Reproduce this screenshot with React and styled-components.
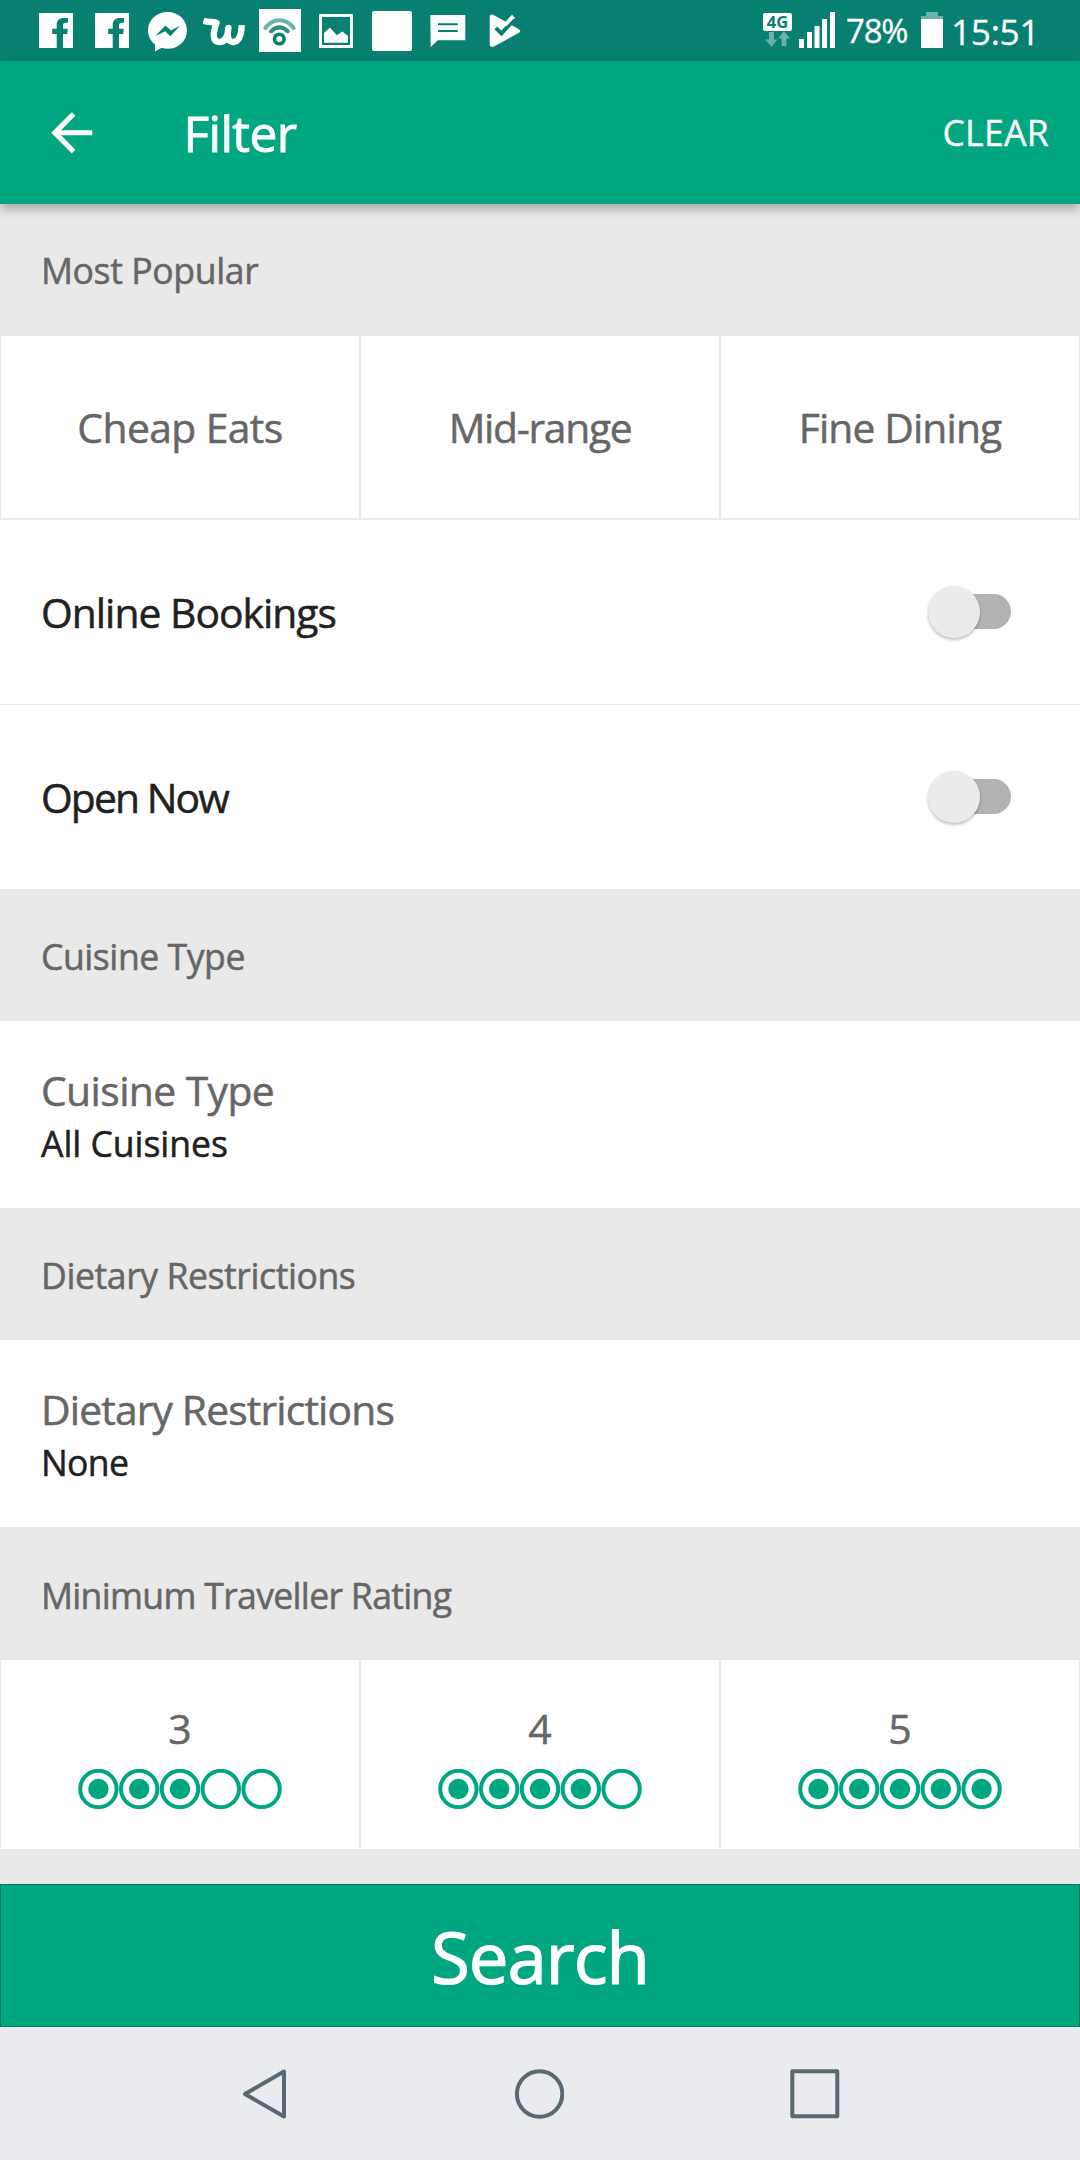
import React from "react";
import styled, { createGlobalStyle } from "styled-components";

const GREEN = "#00a680";
const TEAL = "#088071";
const GREY = "#e9e9e9";
const MUTED = "#666666";
const INK = "#212121";

const GlobalStyle = createGlobalStyle`
  body {
    margin: 0;
    background: ${GREY};
    font-family: "Open Sans", "Noto Sans", sans-serif;
  }
  * { box-sizing: border-box; }
  svg { display: block; flex: none; }
  button { font: inherit; border: 0; margin: 0; padding: 0; background: none; color: inherit; }
`;

const Screen = styled.div`
  display: flex;
  flex-direction: column;
  width: 1080px;
  height: 2160px;
  overflow: hidden;
  background: ${GREY};
`;

const Text = styled.span`
  font-size: ${(p) => p.$size}px;
  letter-spacing: ${(p) => p.$track || 0}px;
  line-height: ${(p) => (p.$line ? `${p.$line}px` : "normal")};
  color: ${(p) => p.$color || "inherit"};
  -webkit-text-stroke: ${(p) => (p.$stroke === undefined ? 0.5 : p.$stroke)}px currentColor;
  white-space: nowrap;
`;

/* ---------- status bar ---------- */
const StatusBar = styled.header`
  display: flex;
  justify-content: space-between;
  height: 61px;
  padding: 0 43px 0 39px;
  background: ${TEAL};
  color: #fff;
  flex: none;
`;

const StatusGroup = styled.div`
  display: flex;
  align-items: flex-start;
`;

const Slot = styled.div`
  flex: none;
  margin: ${(p) => p.$top}px 0 0 ${(p) => p.$gap || 0}px;
`;

const StatusText = styled(Text)`
  width: ${(p) => p.$width}px;
  margin-left: ${(p) => p.$gap}px;
  margin-top: ${(p) => p.$top}px;
`;

const WhiteTile = styled.div`
  width: 40px;
  height: 40px;
  border-radius: 2px;
  background: #fff;
`;

const NetworkBadge = styled.div`
  width: 29px;
  height: 18px;
  border-radius: 2px;
  background: #fff;
  color: ${TEAL};
  font: 700 16.5px/18px "Open Sans", sans-serif;
  text-align: center;
`;

const FacebookIcon = () => (
  <svg width="34" height="35" viewBox="0 0 34 35">
    <path fill="#fff" fillRule="evenodd" d="M0 0H34V35H24V21H28.2L28.8 15.8H24V12.4C24 10.6 24.8 9.8 26.6 9.8H29V5H25C20.4 5 17.7 7.6 17.7 12V15.8H13.2V21H17.7V35H0Z" />
  </svg>
);

const MessengerIcon = () => (
  <svg width="39" height="40" viewBox="148 12 39 40">
    <path fill="#fff" d="M167.5 12C156.6 12 148 20 148 30.5C148 36.4 150.5 40.8 155 44.6V51.5L161.6 47.8C163.5 48.5 165.5 48.8 167.5 48.8C178.4 48.8 187 40.9 187 30.5C187 20 178.4 12 167.5 12Z" />
    <path fill={TEAL} d="M155.5 36L165.3 25.5L171 30.5L180.3 25.5L170.4 36.3L165.2 31.2Z" />
  </svg>
);

const WishIcon = () => (
  <svg width="43" height="31" viewBox="203 16 43 31">
    <path fill="none" stroke="#fff" strokeWidth="6.4" strokeLinejoin="round" d="M203.4 20.6C207.5 22.5 211.5 21.6 216.6 22.8C213.4 31 211.3 41.8 219.4 42C226.3 42.2 227.8 35 228.4 28C227 35.8 227.6 42.2 233.4 42C239.6 41.8 241.4 33.6 241.8 25.2" />
  </svg>
);

const WifiIcon = () => (
  <svg width="42" height="43" viewBox="259 9 42 43">
    <path fill="#fff" d="M259 9H301V52H259Z" />
    <circle cx="279.3" cy="39" r="4.8" fill="none" stroke={TEAL} strokeWidth="3.6" />
    <path fill="none" stroke="#2a9183" strokeWidth="4" strokeLinecap="round" d="M271 31.4Q279.4 23.4 287.8 31.4" />
    <path fill="none" stroke="#6bb3aa" strokeWidth="4" strokeLinecap="round" d="M265.3 28Q271 20.2 279.4 20.2T293.7 28" />
  </svg>
);

const GalleryIcon = () => (
  <svg width="34" height="34" viewBox="0 0 34 34">
    <path fill="none" stroke="#fff" strokeWidth="3" d="M1.5 1.5H32.5V32.5H1.5Z" />
    <path fill="#fff" d="M5 28.8V19L11 13.6L17.8 21.2L23.4 17.6L29 22V28.8Z" />
  </svg>
);

const MessageIcon = () => (
  <svg width="36" height="33" viewBox="0 0 36 33">
    <path fill="#fff" d="M.3 0H35.3V25.3H7.8L.7 32Z" />
    <path fill="none" stroke={TEAL} strokeWidth="2" d="M8 9.2H27.8M8 16H27.8" />
  </svg>
);

const PlayCheckIcon = () => (
  <svg width="32" height="34" viewBox="489 14 32 34">
    <path fill="#fff" d="M489.7 17C489.7 14.8 491.6 14 493.4 15L507.4 22.6L512 15.8L514.8 18L501.6 35.8L495.3 30.2L498 27.2L501.2 30L507.3 22.6L519 29.2C520.7 30.4 520.7 31.8 519 32.8L494 46.4C491.7 47.6 489.7 46.5 489.7 44Z" />
    <path fill="none" stroke={TEAL} strokeWidth="3.8" d="M495.8 27.8L501.4 33.4L514.6 19.4" />
    <path fill="none" stroke="#fff" strokeWidth="3.8" d="M505 24.8L513.4 16.2" />
  </svg>
);

const DataArrows = () => (
  <svg width="29" height="16" viewBox="763 31 29 16">
    <path fill="#6bb3aa" d="M769 32H774V39.5H777.5L771.5 46.8L765 39.5H769ZM781.6 46V38.6H778L784 31.2L790.2 38.6H786.4V46Z" />
  </svg>
);

const SignalIcon = () => (
  <svg width="36" height="36" viewBox="0 0 36 36">
    <path fill="#fff" d="M0 27H5V36H0ZM8 20H13V36H8ZM15.5 14H20.5V36H15.5ZM23 7H28V36H23ZM31 0H36V36H31Z" />
  </svg>
);

const BatteryIcon = () => (
  <svg width="22" height="36" viewBox="0 0 22 36">
    <path fill="#6bb3aa" d="M5 0H17V4H22V7H0V4H5Z" />
    <path fill="#fff" d="M0 7H22V36H0Z" />
  </svg>
);

/* ---------- app bar ---------- */
const AppBar = styled.nav`
  position: relative;
  display: flex;
  align-items: center;
  flex: none;
  height: 143px;
  padding: 0 31px 0 41px;
  background: ${GREEN};
  color: #fff;
  box-shadow: 0 5px 10px rgba(0, 0, 0, 0.28);
`;

const Title = styled(Text)`
  flex: 1;
  margin-left: 81px;
`;

const ClearAction = styled.button`
  padding-bottom: 1px;
`;

const BackIcon = () => (
  <svg width="61.5" height="61.5" viewBox="0 0 24 24">
    <path fill="#fff" d="M20 11H7.83l5.59-5.59L12 4l-8 8 8 8 1.41-1.41L7.83 13H20v-2z" />
  </svg>
);

/* ---------- filter list ---------- */
const Content = styled.main`
  flex: 1;
`;

const SectionTitle = styled.h2`
  display: flex;
  align-items: center;
  height: ${(p) => p.$height || 132}px;
  margin: 0;
  padding: ${(p) => p.$nudge || 0}px 0 0 41px;
  font-weight: 400;
  color: ${MUTED};
`;

const Cells = styled.div`
  display: grid;
  grid-template-columns: repeat(3, 1fr);
  height: ${(p) => p.$height}px;
`;

const Cell = styled.button`
  display: flex;
  flex-direction: column;
  align-items: center;
  justify-content: ${(p) => (p.$top ? "flex-start" : "center")};
  padding-top: ${(p) => p.$top || 0}px;
  border: solid ${GREY};
  border-width: 0 1px ${(p) => p.$edge || 0}px;
  background: #fff;
  color: ${MUTED};
`;

const SwitchRow = styled.label`
  display: flex;
  align-items: center;
  justify-content: space-between;
  height: ${(p) => (p.$divided ? 185 : 184)}px;
  padding: 0 69px 0 41px;
  border-bottom: ${(p) => (p.$divided ? 1 : 0)}px solid ${GREY};
  background: #fff;
  color: ${INK};
`;

const Track = styled.span`
  display: flex;
  align-items: center;
  width: 76px;
  height: 35px;
  margin-bottom: 1px;
  border-radius: 18px;
  background: #b2b2b2;
`;

const Thumb = styled.span`
  flex: none;
  width: 52px;
  height: 52px;
  margin-left: -7.5px;
  border-radius: 50%;
  background: #ebebeb;
  box-shadow: 0 2px 3px rgba(0, 0, 0, 0.24), 0 0 2px rgba(0, 0, 0, 0.06);
`;

const ValueRow = styled.section`
  display: flex;
  flex-direction: column;
  height: 187px;
  padding: 42px 0 0 41px;
  background: #fff;
  color: ${MUTED};
`;

const Bubbles = styled.svg`
  margin-top: 14px;
`;

function Rating({ value }) {
  return (
    <Bubbles width="206" height="40" viewBox="0 0 206 40">
      {[0, 1, 2, 3, 4].map((i) => {
        const cx = 21.4 + i * 40.8;
        return (
          <g key={i}>
            <circle cx={cx} cy="20" r="18.2" fill="#fff" stroke={GREEN} strokeWidth="4" />
            {i < value && <circle cx={cx} cy="20" r="10.2" fill={GREEN} />}
          </g>
        );
      })}
    </Bubbles>
  );
}

/* ---------- footer ---------- */
const SearchButton = styled.button`
  && {
    flex: none;
    height: 143px;
    padding-top: 2px;
    border: 1px solid #067a55;
    background: ${GREEN};
    color: #fff;
  }
`;

const SystemNav = styled.footer`
  display: flex;
  align-items: center;
  justify-content: space-between;
  flex: none;
  height: 133px;
  padding: 0 240px 0 242px;
  background: #e9ebef;
`;

const NavIcon = styled.svg`
  fill: none;
  stroke: #5a6871;
  stroke-width: 4;
  stroke-linejoin: round;
`;

const PRICES = [
  ["Cheap Eats", -0.59],
  ["Mid-range", -1.32],
  ["Fine Dining", -0.88],
];

export default function App() {
  return (
    <Screen>
      <GlobalStyle />
      <StatusBar>
        <StatusGroup>
          <Slot $top={13}><FacebookIcon /></Slot>
          <Slot $top={13} $gap={22}><FacebookIcon /></Slot>
          <Slot $top={12} $gap={19}><MessengerIcon /></Slot>
          <Slot $top={16} $gap={16}><WishIcon /></Slot>
          <Slot $top={9} $gap={13}><WifiIcon /></Slot>
          <Slot $top={14} $gap={18}><GalleryIcon /></Slot>
          <Slot $top={11} $gap={19}><WhiteTile /></Slot>
          <Slot $top={15} $gap={18}><MessageIcon /></Slot>
          <Slot $top={14} $gap={23}><PlayCheckIcon /></Slot>
        </StatusGroup>
        <StatusGroup>
          <Slot $top={13}>
            <NetworkBadge>4G</NetworkBadge>
            <DataArrows />
          </Slot>
          <Slot $top={12} $gap={7}><SignalIcon /></Slot>
          <StatusText $stroke={0.3} $size={32.9} $track={-1.13} $line={44} $top={9} $gap={11} $width={62}>78%</StatusText>
          <Slot $top={12} $gap={13}><BatteryIcon /></Slot>
          <StatusText $stroke={0.3} $size={35.2} $track={-0.3} $line={44} $top={9} $gap={8} $width={86}>15:51</StatusText>
        </StatusGroup>
      </StatusBar>

      <AppBar>
        <BackIcon />
        <Title $size={49.7} $track={-0.63} $stroke={0.9}>Filter</Title>
        <ClearAction><Text $size={35.6} $track={0.28} $stroke={0.3}>CLEAR</Text></ClearAction>
      </AppBar>

      <Content>
        <SectionTitle><Text $size={35.6} $track={-0.39}>Most Popular</Text></SectionTitle>
        <Cells $height={184}>
          {PRICES.map(([label, track]) => (
            <Cell key={label} $edge={2}><Text $size={40.8} $track={track}>{label}</Text></Cell>
          ))}
        </Cells>

        <SwitchRow $divided>
          <Text $size={40.8} $track={-0.98}>Online Bookings</Text>
          <Track><Thumb /></Track>
        </SwitchRow>
        <SwitchRow>
          <Text $size={40.8} $track={-1.9}>Open Now</Text>
          <Track><Thumb /></Track>
        </SwitchRow>

        <SectionTitle $nudge={2}><Text $size={35.6} $track={-0.45}>Cuisine Type</Text></SectionTitle>
        <ValueRow>
          <Text $size={40.8} $track={-0.58} $line={55}>Cuisine Type</Text>
          <Text $size={35.6} $track={-0.07} $line={51} $color={INK}>All Cuisines</Text>
        </ValueRow>

        <SectionTitle $nudge={2}><Text $size={35.6} $track={-0.42}>Dietary Restrictions</Text></SectionTitle>
        <ValueRow>
          <Text $size={40.8} $track={-0.86} $line={55}>Dietary Restrictions</Text>
          <Text $size={35.6} $track={-0.7} $line={51} $color={INK}>None</Text>
        </ValueRow>

        <SectionTitle $height={133} $nudge={2}>
          <Text $size={35.6} $track={-0.68}>Minimum Traveller Rating</Text>
        </SectionTitle>
        <Cells $height={189}>
          {[3, 4, 5].map((n) => (
            <Cell key={n} $top={41}>
              <Text $size={41} $line={54}>{n}</Text>
              <Rating value={n} />
            </Cell>
          ))}
        </Cells>
      </Content>

      <SearchButton><Text $size={70.8} $track={-1.05} $stroke={1.2}>Search</Text></SearchButton>

      <SystemNav>
        <NavIcon width="45" height="50" viewBox="0 0 45 50"><path d="M3 25L42 2.5V47.5Z" /></NavIcon>
        <NavIcon width="50" height="50" viewBox="0 0 50 50"><circle cx="25.6" cy="25" r="22.7" /></NavIcon>
        <NavIcon width="50" height="50" viewBox="0 0 50 50"><path d="M2.3 2.3H47.3V47.3H2.3Z" /></NavIcon>
      </SystemNav>
    </Screen>
  );
}
